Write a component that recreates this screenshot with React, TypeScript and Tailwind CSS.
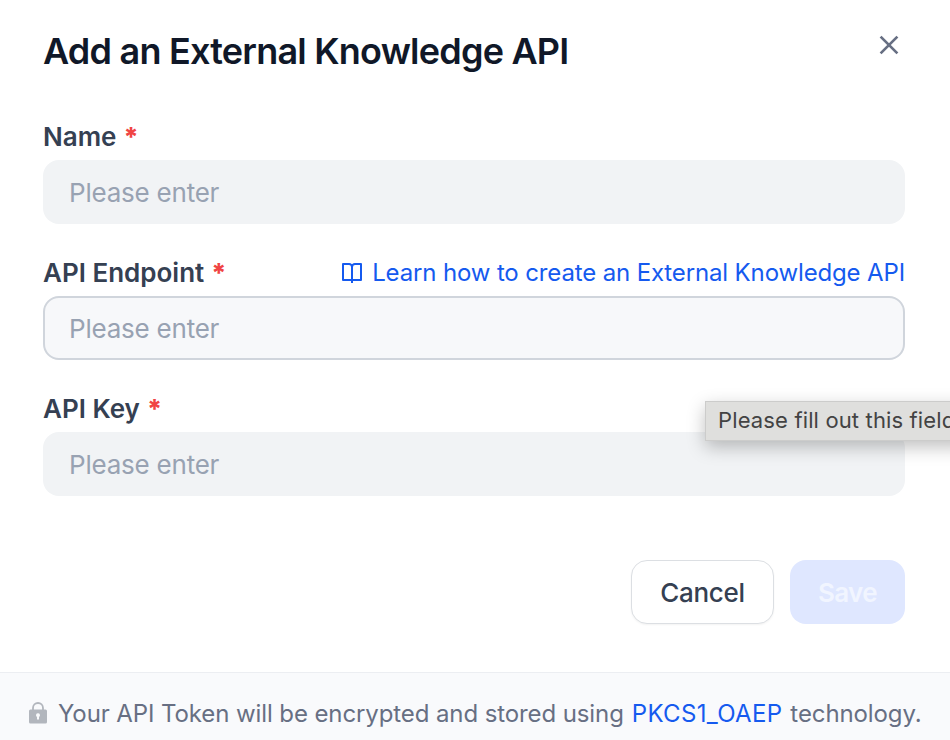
import React from 'react';

function Field({ label, focused, link }: { label: string; focused?: boolean; link?: React.ReactNode }) {
  return (
    <div className="mb-8">
      <div className="flex h-9 items-center justify-between pb-0.5 text-[26px] font-semibold leading-[34px] text-[#354052]">
        <label className="flex">
          {label}
          <span className="ml-[7px] font-extrabold text-[#f04444]">*</span>
        </label>
        {link}
      </div>
      <input
        className={
          focused
            ? 'mt-1 block h-16 w-full rounded-2xl border-2 border-[#d0d5dc] bg-[#f7f8fa] px-6 text-[26px] tracking-[-0.22px] outline-none placeholder:text-[#98a2b2]'
            : 'mt-1 block h-16 w-full rounded-2xl border-2 border-transparent bg-[#f1f3f5] px-6 text-[26px] tracking-[-0.22px] outline-none placeholder:text-[#98a2b2]'
        }
        placeholder="Please enter"
      />
    </div>
  );
}

export default function App() {
  return (
    <div className="relative flex h-[740px] w-[950px] flex-col overflow-hidden bg-white font-['Inter',sans-serif]">
      <header className="flex h-[120px] shrink-0 items-start justify-between pl-[43px] pr-[45px] pt-7">
        <h1 className="text-[36px] font-semibold leading-[46px] tracking-[-0.78px] text-[#101828]">Add an External Knowledge API</h1>
        <svg className="mt-px h-8 w-8" viewBox="0 0 32 32" fill="none" stroke="#676f83" strokeWidth="2.7">
          <path d="M7.6 7.6l16.8 16.8M24.4 7.6L7.6 24.400" />
        </svg>
      </header>
      <main className="flex-1 pl-[43px] pr-[45px]">
        <Field label="Name" />
        <Field
          label="API Endpoint"
          focused
          link={
            <a className="flex items-center gap-2 text-2xl font-normal leading-[34px] tracking-[-0.14px] text-[#155aef]">
              <svg className="mb-px h-6 w-6" viewBox="0 0 24 24" fill="currentColor">
                <path d="M13 20v2h-2v-2H3a1 1 0 0 1-1-1V3a1 1 0 0 1 1-1h6a4 4 0 0 1 3 1.350A4 4 0 0 1 15 2h6a1 1 0 0 1 1 1v16a1 1 0 0 1-1 1h-8zm7-2V4h-5a2 2 0 0 0-2 2v12h7zm-9 0V6a2 2 0 0 0-2-2H4v14h7z" />
              </svg>
              Learn how to create an External Knowledge API
            </a>
          }
        />
        <Field label="API Key" />
        <div className="mt-16 flex justify-end gap-4">
          <button className="h-16 w-[143px] rounded-2xl border border-[#dcdfe3] bg-white text-[26px] font-medium tracking-[-0.3px] text-[#354052] shadow-xs">Cancel</button>
          <button className="h-16 w-[115px] rounded-2xl bg-[#dfe7ff] text-[26px] font-semibold tracking-[-0.6px] text-[#f1f5ff]">Save</button>
        </div>
      </main>
      <footer className="flex h-[68px] shrink-0 items-center border-t border-[#eceef2] bg-[#f9fafc] pl-[26px] pt-3.5 text-2xl text-[#676f83]">
        <svg className="mb-0.5 mr-2 h-6 w-6 shrink-0" viewBox="0 0 24 24">
          <path d="M7 10V7a5 5 0 0 1 10 0v3" fill="none" stroke="#b2b6bd" strokeWidth="1.8" />
          <path fillRule="evenodd" fill="#b2b6bd" d="M4.5 8.5h15A1.5 1.5 0 0 1 21 10v11a1.5 1.5 0 0 1-1.5 1.5h-15A1.5 1.5 0 0 1 3 21V10a1.5 1.5 0 0 1 1.500-1.500zM12 12.300a2 2 0 0 0-1 3.730V18.500h2v-2.470a2 2 0 0 0-1-3.730z" />
        </svg>
        <span className="tracking-[-0.1px]">Your API Token will be encrypted and stored using</span>
        <a className="mx-2 tracking-[0.34px] text-[#155aef]">PKCS1_OAEP</a>
        <span className="tracking-[-0.1px]">technology.</span>
      </footer>
      <div className="absolute -right-5 left-[705px] top-[401px] h-10 whitespace-nowrap border border-[#cccccb] bg-[#dfdfdd] pl-3 text-[22px] leading-[37px] tracking-[0.14px] text-[#434343] shadow-[0_6px_18px_rgba(0,0,0,0.25)]">
        Please fill out this field.
      </div>
    </div>
  );
}
